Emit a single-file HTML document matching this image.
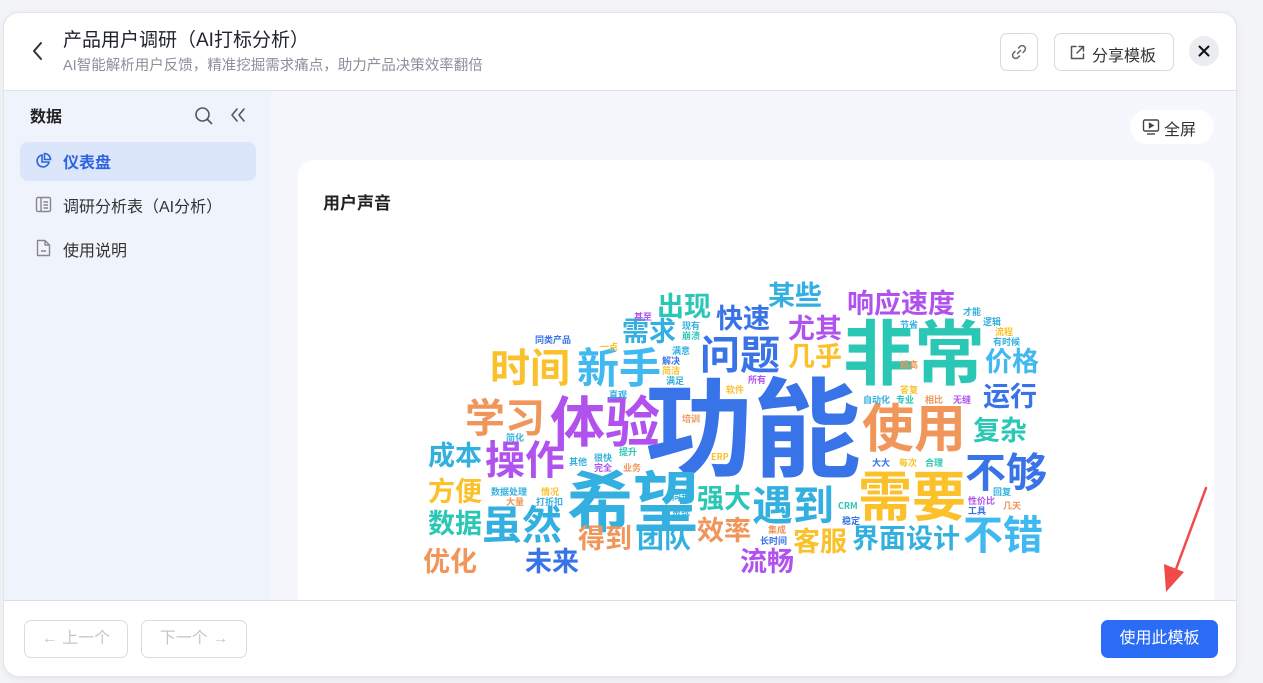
<!DOCTYPE html>
<html><head><meta charset="utf-8">
<style>
*{box-sizing:border-box;margin:0;padding:0}
body{width:1263px;height:683px;background:#f3f4f7;font-family:"Liberation Sans","Noto Sans CJK SC",sans-serif;position:relative;overflow:hidden;color:#1f2329}
.modal{position:absolute;left:3px;top:12px;width:1234px;height:665px;background:#fff;border-radius:16px;border:1px solid #e2e4ea;overflow:hidden;box-shadow:0 2px 8px rgba(0,0,0,.06)}
.hdr{position:absolute;left:0;top:0;width:100%;height:78px;border-bottom:1px solid #dfe2ea}
.side{position:absolute;left:0;top:78px;width:267px;height:509px;background:#eff3fc}
.main{position:absolute;left:267px;top:78px;width:967px;height:509px;background:#f5f7fc}
.foot{position:absolute;left:0;top:587px;width:100%;height:78px;border-top:1px solid #dcdfe6;background:#fff}
.abs{position:absolute}
.w{position:absolute;font-weight:700;line-height:1;white-space:nowrap;font-family:"Noto Sans CJK SC",sans-serif}
.b{color:#3873e8}.t{color:#2bc7b5}.s{color:#33b0df}.y{color:#fbc12a}.o{color:#f0965a}.p{color:#b152ee}.l{color:#40b9f0}
.sm{font-size:9px}
</style></head><body>
<div class="modal">
 <div class="hdr">
  <svg class="abs" style="left:27px;top:28px" width="14" height="20" viewBox="0 0 14 20"><path d="M10 2 L3 10 L10 18" fill="none" stroke="#333" stroke-width="2" stroke-linecap="round" stroke-linejoin="round"/></svg>
  <div class="abs" style="left:59px;top:12px;font-size:19px;color:#1f2329">产品用户调研（AI打标分析）</div>
  <div class="abs" style="left:59px;top:41px;font-size:14.5px;color:#8a8f99">AI智能解析用户反馈，精准挖掘需求痛点，助力产品决策效率翻倍</div>
  <div class="abs" style="left:996px;top:20px;width:38px;height:38px;border:1px solid #d6d9e0;border-radius:7px">
   <svg class="abs" style="left:9px;top:9px" width="18" height="18" viewBox="0 0 18 18" fill="none" stroke="#666" stroke-width="1.5" stroke-linecap="round"><path d="M7.5 10.5 L10.5 7.5"/><path d="M8.5 5 L10 3.5 a2.5 2.5 0 0 1 4.5 4.5 L13 9.5"/><path d="M9.5 13 L8 14.5 a2.5 2.5 0 0 1 -4.5 -4.5 L5 8.5"/></svg>
  </div>
  <div class="abs" style="left:1050px;top:20px;width:120px;height:38px;border:1px solid #d6d9e0;border-radius:7px">
   <svg class="abs" style="left:14px;top:10px" width="17" height="17" viewBox="0 0 17 17" fill="none" stroke="#555" stroke-width="1.5" stroke-linecap="round" stroke-linejoin="round"><path d="M7 2.5 H2.5 V14.5 H14.5 V10"/><path d="M8 9 L14.5 2.5 M10 2.5 H14.5 V7"/></svg>
   <div class="abs" style="left:37px;top:8px;font-size:16px;color:#333">分享模板</div>
  </div>
  <div class="abs" style="left:1185px;top:23px;width:30px;height:30px;border-radius:50%;background:#ebecf0">
   <svg class="abs" style="left:9px;top:9px" width="12" height="12" viewBox="0 0 12 12"><path d="M1.5 1.5 L10.5 10.5 M10.5 1.5 L1.5 10.5" stroke="#111" stroke-width="2" stroke-linecap="round"/></svg>
  </div>
 </div>
 <div class="side">
  <div class="abs" style="left:26px;top:12px;font-size:16px;font-weight:700;color:#222">数据</div>
  <svg class="abs" style="left:190px;top:15px" width="20" height="20" viewBox="0 0 20 20" fill="none" stroke="#555" stroke-width="1.6" stroke-linecap="round"><circle cx="8.5" cy="8.5" r="6.5"/><path d="M13.5 13.5 L17.5 17.5"/></svg>
  <svg class="abs" style="left:225px;top:16px" width="18" height="16" viewBox="0 0 18 16" fill="none" stroke="#555" stroke-width="1.6" stroke-linecap="round" stroke-linejoin="round"><path d="M8 2 L3 8 L8 14 M15 2 L10 8 L15 14"/></svg>
  <div class="abs" style="left:16px;top:51px;width:236px;height:39px;background:#dce6fb;border-radius:8px"></div>
  <svg class="abs" style="left:30px;top:61px" width="18" height="18" viewBox="0 0 18 18" fill="none" stroke="#2c63e0" stroke-width="1.6"><path d="M8 3 A6 6 0 1 0 15 10 H8 Z"/><path d="M10.5 1.5 A6 6 0 0 1 16.5 7.5 H10.5 Z"/></svg>
  <div class="abs" style="left:59px;top:58px;font-size:16px;font-weight:700;color:#2c63e0">仪表盘</div>
  <svg class="abs" style="left:31px;top:105px" width="17" height="17" viewBox="0 0 17 17" fill="none" stroke="#888" stroke-width="1.4"><rect x="1.5" y="1.5" width="14" height="14" rx="1.5"/><path d="M6 1.5 V15.5 M8.5 6 H13 M8.5 9 H13 M8.5 12 H13"/></svg>
  <div class="abs" style="left:59px;top:102px;font-size:16px;color:#333">调研分析表（AI分析）</div>
  <svg class="abs" style="left:32px;top:148px" width="15" height="18" viewBox="0 0 15 18" fill="none" stroke="#888" stroke-width="1.4" stroke-linejoin="round"><path d="M1.5 1.5 H9 L13.5 6 V16.5 H1.5 Z M9 1.5 V6 H13.5 M5 12 H10"/></svg>
  <div class="abs" style="left:59px;top:146px;font-size:16px;color:#333">使用说明</div>
 </div>
 <div class="main">
  <div class="abs" style="left:859px;top:19px;width:84px;height:34px;background:#fff;border-radius:17px">
   <svg class="abs" style="left:12px;top:8px" width="18" height="18" viewBox="0 0 18 18" fill="none" stroke="#444" stroke-width="1.4"><rect x="1.5" y="2" width="15" height="11" rx="1.5"/><path d="M7.5 5.5 L11 7.5 L7.5 9.5 Z" fill="#444"/><path d="M5 16 H13"/></svg>
   <div class="abs" style="left:34px;top:6px;font-size:16px;color:#333">全屏</div>
  </div>
  <div class="abs" style="left:27px;top:69px;width:916px;height:480px;background:#fff;border-radius:16px">
   <div class="abs" style="left:25px;top:29px;font-size:17px;font-weight:700;color:#222">用户声音</div>
  </div>
 </div>
 <div class="foot">
  <div class="abs" style="left:20px;top:19px;width:104px;height:38px;border:1px solid #d8dbe3;border-radius:7px;color:#c3c6ce;font-size:16px;text-align:center;line-height:36px">← 上一个</div>
  <div class="abs" style="left:137px;top:19px;width:106px;height:38px;border:1px solid #d8dbe3;border-radius:7px;color:#c3c6ce;font-size:16px;text-align:center;line-height:36px">下一个 →</div>
  <div class="abs" style="left:1097px;top:19px;width:117px;height:38px;background:#2b6cf6;border-radius:7px;color:#fff;font-size:16px;text-align:center;line-height:37px">使用此模板</div>
 </div>
</div>
<!-- word cloud -->
<div class="w b" style="left:645px;top:368px;font-size:108px">功能</div>
<div class="w t" style="left:843px;top:314px;font-size:71px">非常</div>
<div class="w s" style="left:567px;top:465px;font-size:66px">希望</div>
<div class="w y" style="left:858px;top:466px;font-size:54px">需要</div>
<div class="w o" style="left:862px;top:399px;font-size:52px">使用</div>
<div class="w p" style="left:550px;top:391px;font-size:55px">体验</div>
<div class="w y" style="left:490px;top:345px;font-size:40px">时间</div>
<div class="w l" style="left:577px;top:345px;font-size:42px">新手</div>
<div class="w o" style="left:465px;top:395px;font-size:40px">学习</div>
<div class="w b" style="left:700px;top:332px;font-size:40px">问题</div>
<div class="w p" style="left:485px;top:437px;font-size:40px">操作</div>
<div class="w s" style="left:482px;top:502px;font-size:40px">虽然</div>
<div class="w s" style="left:752px;top:482px;font-size:41px">遇到</div>
<div class="w b" style="left:965px;top:449px;font-size:41px">不够</div>
<div class="w l" style="left:963px;top:512px;font-size:40px">不错</div>
<div class="w t" style="left:657px;top:291px;font-size:27px">出现</div>
<div class="w s" style="left:768px;top:280px;font-size:27px">某些</div>
<div class="w p" style="left:847px;top:288px;font-size:27px">响应速度</div>
<div class="w b" style="left:716px;top:303px;font-size:27px">快速</div>
<div class="w s" style="left:622px;top:316px;font-size:27px">需求</div>
<div class="w p" style="left:788px;top:313px;font-size:27px">尤其</div>
<div class="w y" style="left:788px;top:341px;font-size:27px">几乎</div>
<div class="w l" style="left:985px;top:346px;font-size:27px">价格</div>
<div class="w b" style="left:983px;top:381px;font-size:27px">运行</div>
<div class="w t" style="left:973px;top:415px;font-size:27px">复杂</div>
<div class="w s" style="left:428px;top:440px;font-size:27px">成本</div>
<div class="w y" style="left:428px;top:476px;font-size:27px">方便</div>
<div class="w t" style="left:428px;top:508px;font-size:27px">数据</div>
<div class="w o" style="left:423px;top:546px;font-size:27px">优化</div>
<div class="w t" style="left:697px;top:483px;font-size:27px">强大</div>
<div class="w o" style="left:697px;top:515px;font-size:27px">效率</div>
<div class="w o" style="left:578px;top:523px;font-size:27px">得到</div>
<div class="w s" style="left:637px;top:523px;font-size:27px">团队</div>
<div class="w b" style="left:525px;top:546px;font-size:27px">未来</div>
<div class="w p" style="left:740px;top:546px;font-size:27px">流畅</div>
<div class="w y" style="left:793px;top:526px;font-size:27px">客服</div>
<div class="w s" style="left:852px;top:523px;font-size:27px">界面设计</div>
<div class="w p sm" style="left:634px;top:312px">甚至</div>
<div class="w s sm" style="left:682px;top:321px">现有</div>
<div class="w t sm" style="left:682px;top:331px">崩溃</div>
<div class="w b sm" style="left:535px;top:335px">同类产品</div>
<div class="w y sm" style="left:600px;top:342px">一点</div>
<div class="w s sm" style="left:672px;top:346px">满意</div>
<div class="w b sm" style="left:662px;top:356px">解决</div>
<div class="w y sm" style="left:662px;top:366px">简洁</div>
<div class="w s sm" style="left:666px;top:376px">满足</div>
<div class="w s sm" style="left:609px;top:390px">直观</div>
<div class="w y sm" style="left:726px;top:385px">软件</div>
<div class="w p sm" style="left:748px;top:375px">所有</div>
<div class="w o sm" style="left:682px;top:414px">培训</div>
<div class="w s sm" style="left:506px;top:433px">简化</div>
<div class="w t sm" style="left:619px;top:447px">提升</div>
<div class="w s sm" style="left:569px;top:457px">其他</div>
<div class="w s sm" style="left:594px;top:453px">很快</div>
<div class="w p sm" style="left:594px;top:463px">完全</div>
<div class="w o sm" style="left:623px;top:463px">业务</div>
<div class="w y sm" style="left:711px;top:452px">ERP</div>
<div class="w s sm" style="left:491px;top:487px">数据处理</div>
<div class="w y sm" style="left:541px;top:487px">情况</div>
<div class="w o sm" style="left:506px;top:497px">大量</div>
<div class="w s sm" style="left:536px;top:497px">打折扣</div>
<div class="w s sm" style="left:672px;top:492px">同步</div>
<div class="w s sm" style="left:672px;top:507px">系统</div>
<div class="w o sm" style="left:768px;top:525px">集成</div>
<div class="w b sm" style="left:760px;top:536px">长时间</div>
<div class="w t sm" style="left:838px;top:501px">CRM</div>
<div class="w b sm" style="left:842px;top:516px">稳定</div>
<div class="w s sm" style="left:900px;top:320px">节省</div>
<div class="w s sm" style="left:963px;top:307px">才能</div>
<div class="w s sm" style="left:983px;top:317px">逻辑</div>
<div class="w y sm" style="left:995px;top:327px">流程</div>
<div class="w s sm" style="left:993px;top:337px">有时候</div>
<div class="w o sm" style="left:900px;top:360px">超高</div>
<div class="w y sm" style="left:900px;top:385px">答复</div>
<div class="w s sm" style="left:863px;top:395px">自动化</div>
<div class="w t sm" style="left:896px;top:395px">专业</div>
<div class="w o sm" style="left:925px;top:395px">相比</div>
<div class="w p sm" style="left:953px;top:395px">无缝</div>
<div class="w b sm" style="left:872px;top:458px">大大</div>
<div class="w y sm" style="left:899px;top:458px">每次</div>
<div class="w t sm" style="left:925px;top:458px">合理</div>
<div class="w p sm" style="left:968px;top:496px">性价比</div>
<div class="w s sm" style="left:993px;top:487px">回复</div>
<div class="w b sm" style="left:968px;top:506px">工具</div>
<div class="w o sm" style="left:1003px;top:501px">几天</div>
<!-- arrow -->
<svg class="abs" style="left:1150px;top:480px" width="70" height="120" viewBox="0 0 70 120"><path d="M56 8 L22 100" stroke="#f04a4a" stroke-width="2.5" stroke-linecap="round"/><path d="M14 84 L16 112 L34 92 Z" fill="#f04a4a"/></svg>
</body></html>
